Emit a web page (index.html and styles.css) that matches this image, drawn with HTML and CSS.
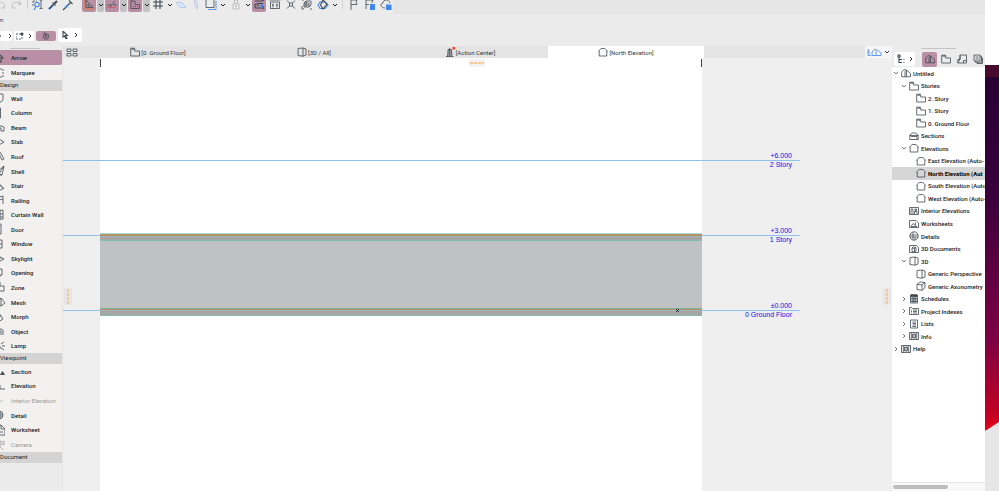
FILE: index.html
```html
<!DOCTYPE html>
<html lang="en">
<head>
  <meta charset="UTF-8" />
  <title>Untitled - North Elevation</title>
  <link rel="stylesheet" href="styles.css">
</head>
<body>
  <!-- Shared icons -->
  <svg class="sprite" aria-hidden="true">
    <symbol id="chev" viewBox="0 0 6 6"><path d="M1 2l2 2 2-2" /></symbol>
    <symbol id="chev-r" viewBox="0 0 6 6"><path d="M2 1l2 2-2 2" /></symbol>
    <symbol id="story" viewBox="0 0 10 10"><path d="M.7 1.200h4v2.800H9.500v5H.7zM2 1.200V3M3.300 1.200V3" /></symbol>
    <symbol id="house" viewBox="0 0 10 10"><path d="M.6 4L3.200 1.500h3.600L9.400 4H8.800v5H1.200V4z" /></symbol>
    <symbol id="section" viewBox="0 0 10 10"><path d="M.8 4l2.500-2h3.400L9.200 4v4.500H.8zM1 4.500h8M2 5.500h6V8" /></symbol>
    <symbol id="cube" viewBox="0 0 10 10"><path d="M1 1.500L6 1v8.200L1 8.500zM6 1l3 1v6L6 9.200" /></symbol>
    <symbol id="axo" viewBox="0 0 10 10"><path d="M1 3.300L6 4v5.300L1 8.500zM1 3.300L4 1l5 .6L6 4M9 1.600v5L6 9.300" /></symbol>
    <symbol id="project" viewBox="0 0 10 10"><path d="M.7 8.800V4L3.700 1l1.800 2M.7 8.800H4V3.500L5.500 2l4 3.500v3.300H4M5.500 2v6.800" /></symbol>
    <symbol id="interior" viewBox="0 0 10 10"><path d="M.5 1.500h9v7h-9zM2 8.500V3h2v5.500M5.500 8V5.500h2.500V8M6 3h1.500v1.500H6z" /></symbol>
    <symbol id="worksheet" viewBox="0 0 10 10"><path d="M.5 8.500v-7h6.500L9.500 4v4.500zM2 7.500l2-3 2.500 2v-3M2 7.500h6" /></symbol>
    <symbol id="detail" viewBox="0 0 10 10"><circle cx="5" cy="5" r="4.200" /><path d="M1 4h8M1 6h8M4 1v8M6 6v3" /></symbol>
    <symbol id="doc3d" viewBox="0 0 10 10"><path d="M.5 1.500h7l2 2v5h-9zM3 4l2.500.5V8L3 7.500zM3 4l1.500-1 2.500.5L5.500 4.500M7 3.500V7L5.500 8" /></symbol>
    <symbol id="sched" viewBox="0 0 10 10"><path class="fill" d="M2 .8h6v2H2z" /><path d="M1.500 1h7v8h-7zM1.500 4.500h7M1.500 6h7M1.500 7.500h7M4 3v6M6 3v6" /></symbol>
    <symbol id="index" viewBox="0 0 10 10"><path d="M.5 1.500h2l1 1h6v6h-9zM2 4h1M4 4h4M2 5.500h1M4 5.500h4M2 7h1M4 7h4" /></symbol>
    <symbol id="lists" viewBox="0 0 10 10"><path d="M1.500 1h7v8h-7zM3.500 3H7M3.500 4.500H7M3.500 6H7M3.500 7.500H7" /></symbol>
    <symbol id="info" viewBox="0 0 10 10"><path d="M.5 1.500h9v7h-9zM2.300 1.500v7M7.700 1.500v7M3.500 3h3v4h-3zM5 3v4" /></symbol>
    <symbol id="layout" viewBox="0 0 10 10"><path d="M3 1h6.500v8H.8L3 5zM3 1v4.500H.8V9M6.500 9V6.500h3" /></symbol>
    <symbol id="publish" viewBox="0 0 10 10"><path d="M1 1h6v6H1zM2.500 7v1.300h6v-6H7M4 8.300v1.200h5.500V4H8.500M2.500 3h3M2.500 5h3" /></symbol>
  </svg>

  <div class="desktop">
    <div class="window">
      <!-- Main toolbar -->
      <div class="toolbar">
        <button class="tool dim first" aria-label="Undo"><svg viewBox="0 0 12 12"><path d="M3 2L1 5l3 1M1.500 5c4-4 9-1 8 4H6" /></svg></button>
        <button class="tool dim" aria-label="Redo"><svg viewBox="0 0 12 12"><path d="M9 2l2 3-3 1M10.500 5c-4-4-10-1-8 4H6" /></svg></button>
        <span class="sep"></span>
        <button class="tool" aria-label="Find and Select"><svg viewBox="0 0 12 12"><path class="dash" d="M1 2h4M1 2v5" /><path d="M9 1v8M7.500 1h3M7.500 9.500h3" /><circle class="blue-line mid" cx="5" cy="5.500" r="2.200" /><path class="blue-line mid" d="M4 7.500L2 11" /></svg></button>
        <button class="tool" aria-label="Pick Up Parameters"><svg viewBox="0 0 12 12"><path class="blue-line thick" d="M2 10l4-4" /><path class="mid" d="M5.500 3.500l3 3M2 10l5-5" /><path class="thick" d="M7.500 4.500L10 2" /></svg></button>
        <button class="tool" aria-label="Inject Parameters"><svg viewBox="0 0 12 12"><path class="blue-line thick" d="M3 9l3-3" /><path class="mid" d="M6 6l3-3M7 1.500l3.500 3.500M1 11l2-2" /></svg></button>

        <button class="tool on group" aria-label="Guide Lines"><svg viewBox="0 0 12 12"><path class="orange-line mid" d="M2 0v10h9" /><path d="M3 1l7 7.500H3zM5 5.500v1.500h1.500z" /></svg></button>
        <button class="drop shade" aria-label="Guide Line options"><svg><use href="#chev" /></svg></button>
        <button class="tool on" aria-label="Snap Guides"><svg viewBox="0 0 12 12"><path d="M1 6h4M7 6h4M4 8l5-6" /><path class="red-line" d="M1 8.500h9" /></svg></button>
        <button class="drop shade" aria-label="Snap Guide options"><svg><use href="#chev" /></svg></button>
        <button class="tool on" aria-label="Tracker"><svg viewBox="0 0 12 12"><path d="M2 0v9.500h8.500V5.500H6V2H2M4 7.500h1M6 7.500h1M8 7.500h1" /></svg></button>
        <button class="drop shade" aria-label="Tracker options"><svg><use href="#chev" /></svg></button>
        <button class="tool" aria-label="Grid"><svg viewBox="0 0 12 12"><path class="mid" d="M4 0v10M8 0v10M1 3h10M1 7h10" /></svg></button>
        <button class="drop" aria-label="Grid options"><svg><use href="#chev" /></svg></button>
        <button class="tool" aria-label="Editing Plane"><svg viewBox="0 0 12 12"><path class="pale" d="M1 3.500h6l4 5H5z" /></svg></button>
        <button class="tool" aria-label="Plane Display"><svg viewBox="0 0 12 12"><path class="pale" d="M5 1l2.500 3v6L5 7z" /></svg></button>
        <button class="tool" aria-label="Trace"><svg viewBox="0 0 12 12"><path class="blue-line" d="M3 10.500h8V2" /><path d="M1 0h8v8.500H1z" /></svg></button>
        <button class="drop" aria-label="Trace options"><svg><use href="#chev" /></svg></button>
        <button class="tool dim spaced" aria-label="Suspend Groups"><svg viewBox="0 0 12 12"><path d="M3 5h6v5H3zM4.500 5V1h3v4M5.500 7h1v1h-1z" /></svg></button>
        <button class="drop" aria-label="Group options"><svg><use href="#chev" /></svg></button>
        <button class="tool on" aria-label="Renovation"><svg viewBox="0 0 12 12"><path class="mid" d="M2 2h7l2-1M2 5.500l3-1h5M2 9h8M2 5v4M10.500 7v3M4 7l2-1" /><path class="blue-fill" d="M7.500 5.500h3v3h-3z" /></svg></button>
        <button class="tool wide" aria-label="Dimensions"><svg viewBox="0 0 12 12"><path d="M.5 1h11M1.500 3h9v6.500h-9zM4 4.500v4M8 4.500v4M3 6h2M7 6h2" /></svg></button>
        <button class="tool wide" aria-label="Explode"><svg viewBox="0 0 12 12"><path d="M2 1.500l2.500 2.500M10 1.500L7.500 4M2 9.500L4.500 7M10 9.500L7.500 7M4.500 4h3v3h-3z" /></svg></button>
        <button class="tool wide" aria-label="Transform"><svg viewBox="0 0 12 12"><path d="M3 8V4l2-2h5v4L8 8zM3 4h5v4M1 1h2M1 10h2M9 10h2M5 2v6M3 6h5M1 7v3" /></svg></button>
        <button class="tool wide" aria-label="3D Cutting"><svg viewBox="0 0 12 12"><path class="blue-line mid" d="M1 6l2-3h5l3 3-3 3.500H3z" /><path class="mid" d="M6 1l4 4-4 5-2.500-4z" /></svg></button>
        <button class="drop" aria-label="3D Cutting options"><svg><use href="#chev" /></svg></button>
        <span class="sep"></span>
        <button class="tool wide" aria-label="Favorites"><svg viewBox="0 0 12 12"><path d="M3 11V1h6L8 3l1 2.500H3" /></svg></button>
        <button class="tool wide" aria-label="Issue Organizer"><svg viewBox="0 0 12 12"><path d="M2 10V1h7L8 3v1M2 5.500h3" /><path class="blue-fill" d="M6 5h5v6H6z" /></svg></button>
        <button class="tool wide" aria-label="Cloud Status"><svg viewBox="0 0 12 12"><path d="M5 9C0 9 0 4 3 4c0-4 6-4 7 0" /><path class="blue-fill" d="M6 5.500h5.500V11H6z" /></svg></button>
      </div>

      <!-- Info box -->
      <div class="infobox">
        <div class="info-label">n:</div>
        <div class="info-row">
          <button class="mode cut" aria-label="Selection method"><svg viewBox="0 0 8 8"><path d="M0 4h2M1 3v2" /></svg><svg class="mini"><use href="#chev-r" /></svg></button>
          <button class="mode" aria-label="Marquee method"><svg viewBox="0 0 8 8"><path class="dash" d="M0 2h6v5H0z" /><path class="fill" d="M5 1h2v2H5z" /></svg><svg class="mini"><use href="#chev-r" /></svg></button>
          <button class="mode on" aria-label="Quick Selection"><svg viewBox="0 0 8 8"><circle cx="4" cy="4.500" r="2.800" /><circle cx="4" cy="4.500" r="1" /><path d="M2 0l2 4" /></svg></button>
          <button class="mode tall" aria-label="Arrow"><svg viewBox="0 0 8 8"><path class="mid" d="M2 0v6l1.500-1L5 8l1-.5-1.500-3h2z" /></svg><svg class="mini"><use href="#chev-r" /></svg></button>
        </div>
      </div>

      <div class="workspace">
        <!-- Toolbox -->
        <nav class="toolbox">
          <div class="grip"></div>
          <ul class="tools pair">
            <li><button class="selected"><svg viewBox="0 0 12 12"><path class="mid" d="M6 2l4 4H8v4H6" /></svg>Arrow</button></li>
            <li><button><svg viewBox="0 0 12 12"><path class="dash" d="M1 2h9v8H1z" /></svg>Marquee</button></li>
          </ul>
          <h2>Design</h2>
          <ul class="tools design">
            <li><button><svg viewBox="0 0 12 12"><path d="M3 2h7v6l-2 2H3" /></svg>Wall</button></li>
            <li><button><svg viewBox="0 0 12 12"><path d="M5 1h2.500v10H5" /></svg>Column</button></li>
            <li><button><svg viewBox="0 0 12 12"><path d="M2 4l6 1 3 1v4H8V7L2 6" /></svg>Beam</button></li>
            <li><button><svg viewBox="0 0 12 12"><path d="M2 3h4l5 3-5 3H2" /></svg>Slab</button></li>
            <li><button><svg viewBox="0 0 12 12"><path d="M2 8l5-6 4 7-2 1-3-6" /></svg>Roof</button></li>
            <li><button><svg viewBox="0 0 12 12"><path d="M11 1L9 10 6 9l5-8-6 5v4l4 0" /></svg>Shell</button></li>
            <li><button><svg viewBox="0 0 12 12"><path d="M3 4h4v2h2v2h2L8 10 3 8M3 6h4" /></svg>Stair</button></li>
            <li><button><svg viewBox="0 0 12 12"><path d="M2 4l8-2v8M2 7l8-2M6 3v7" /></svg>Railing</button></li>
            <li><button><svg viewBox="0 0 12 12"><path d="M3 2l7-1v9l-7 1M3 5h7M3 8h7M7 1v9" /></svg>Curtain Wall</button></li>
            <li><button><svg viewBox="0 0 12 12"><path d="M3 1h5v10H3M6 6v1" /></svg>Door</button></li>
            <li><button><svg viewBox="0 0 12 12"><path d="M3 2h6v8H3M3 6h6" /></svg>Window</button></li>
            <li><button><svg viewBox="0 0 12 12"><path d="M2 4l5 1 4 2-4 2-5-1M4 6h4" /></svg>Skylight</button></li>
            <li><button><svg viewBox="0 0 12 12"><path d="M3 2h6v6H3M7 8v2H3" /></svg>Opening</button></li>
            <li><button><svg viewBox="0 0 12 12"><path d="M3 1h4v4h4v5H5V6H3" /></svg>Zone</button></li>
            <li><button><svg viewBox="0 0 12 12"><path d="M3 7l5-5 4 5-4 3-5-3M8 2v8" /></svg>Mesh</button></li>
            <li><button><svg viewBox="0 0 12 12"><path d="M5 1l3 4 2 3-3 2H3M5 5l3 0" /></svg>Morph</button></li>
            <li><button><svg viewBox="0 0 12 12"><path d="M3 4h5l2 1v5M8 6v4M3 6h5" /></svg>Object</button></li>
            <li><button><svg viewBox="0 0 12 12"><path d="M3 5a3 3 0 0 1 4 4H3M8 4l3-2M9 6h3M8 8l3 2" /></svg>Lamp</button></li>
          </ul>
          <h2>Viewpoint</h2>
          <ul class="tools views">
            <li><button><svg viewBox="0 0 12 12"><path d="M2 9.500h10" /><path class="fill" d="M9.500 6.500l1.500 2.500H8z" /></svg>Section</button></li>
            <li><button><svg viewBox="0 0 12 12"><path d="M2 9h10M7 5v4" /></svg>Elevation</button></li>
            <li><button class="off"><svg viewBox="0 0 12 12"><path d="M5 6h3M9 6h1" /></svg>Interior Elevation</button></li>
            <li><button><svg viewBox="0 0 12 12"><circle cx="6" cy="6" r="4" /><path d="M2 5h8M2 7h8M7 2v8" /></svg>Detail</button></li>
            <li><button><svg viewBox="0 0 12 12"><path d="M3 1h5l4 4v6H3M8 1v4h4M6 8h4" /></svg>Worksheet</button></li>
            <li><button class="off"><svg viewBox="0 0 12 12"><path d="M4 2h4v4H4M9 3l2-1v4L9 5M7 7l3 4M6 7v4" /></svg>Camera</button></li>
          </ul>
          <h2>Document</h2>
        </nav>

        <!-- Drawing area -->
        <main class="main">
          <div class="tabs">
            <button class="overview" aria-label="Tab overview"><svg viewBox="0 0 12 9"><path d="M1 1h4v2.500H1zM7 1h4v2.500H7zM1 5.500h4V8H1zM7 5.500h4V8H7z" /></svg></button>
            <button class="tab"><svg><use href="#story" /></svg>[0. Ground Floor]</button>
            <button class="tab"><svg><use href="#cube" /></svg>[3D / All]</button>
            <button class="tab"><svg viewBox="0 0 10 10"><path d="M2.500 9.500L3 4h3.500l.5 5.500M1 9.500h7.500M3 4V2.500h3.500V4M3 6h4M3 8h4M4.700 1v8" /><path class="alert" d="M7.500 0H10v2.500H7.500z" /></svg>[Action Center]</button>
            <button class="tab active"><svg><use href="#house" /></svg>[North Elevation]</button>
            <button class="popup" aria-label="Pop-up navigator"><svg viewBox="0 0 15 10"><path class="blue-line" d="M1 2v6.500h3M1 4h2M1 6h2M5 8.500V5l3-3 2 1.500M5 8.500h9V6l-3.500-3L9 4.500v4" /></svg><svg class="mini"><use href="#chev" /></svg></button>
          </div>

          <div class="canvas">
            <div class="paper">
              <div class="building">
                <div class="slab"></div>
                <div class="wall"></div>
                <div class="slab base"></div>
              </div>
            </div>
            <div class="story two"><span>+6.000</span><span>2 Story</span></div>
            <div class="story one"><span>+3.000</span><span>1 Story</span></div>
            <div class="story zero"><span>±0.000</span><span>0 Ground Floor</span></div>
            <svg class="origin" viewBox="0 0 5 5"><path d="M1 1l3 3M4 1L1 4" /></svg>
            <div class="handle top"></div>
            <div class="handle left"></div>
            <div class="handle right"></div>
          </div>
        </main>

        <!-- Navigator -->
        <aside class="navigator">
          <div class="grip"></div>
          <div class="nav-head">
            <button class="chooser" aria-label="Project chooser"><svg viewBox="0 0 10 10"><path class="mid" d="M2 1h2v2H2zM3 3v5.500h3M3 5.500h3M7.500 5.500h1M7.500 8.500h1" /></svg><svg class="mini"><use href="#chev-r" /></svg></button>
            <button class="map on" aria-label="Project Map"><svg><use href="#project" /></svg></button>
            <button class="map" aria-label="View Map"><svg><use href="#story" /></svg></button>
            <button class="map" aria-label="Layout Book"><svg><use href="#layout" /></svg></button>
            <button class="map" aria-label="Publisher Sets"><svg><use href="#publish" /></svg></button>
          </div>
          <div class="tree-box">
            <ul class="tree">
              <li class="lv0"><svg class="mini"><use href="#chev" /></svg><svg><use href="#project" /></svg>Untitled</li>
              <li class="lv1"><svg class="mini"><use href="#chev" /></svg><svg><use href="#story" /></svg>Stories</li>
              <li class="lv2"><svg><use href="#story" /></svg>2. Story</li>
              <li class="lv2"><svg><use href="#story" /></svg>1. Story</li>
              <li class="lv2"><svg><use href="#story" /></svg>0. Ground Floor</li>
              <li class="lv1 leaf"><svg><use href="#section" /></svg>Sections</li>
              <li class="lv1"><svg class="mini"><use href="#chev" /></svg><svg><use href="#house" /></svg>Elevations</li>
              <li class="lv2"><svg><use href="#house" /></svg>East Elevation (Auto-</li>
              <li class="lv2 current"><svg><use href="#house" /></svg>North Elevation (Aut</li>
              <li class="lv2"><svg><use href="#house" /></svg>South Elevation (Auto</li>
              <li class="lv2"><svg><use href="#house" /></svg>West Elevation (Auto-</li>
              <li class="lv1 leaf"><svg><use href="#interior" /></svg>Interior Elevations</li>
              <li class="lv1 leaf"><svg><use href="#worksheet" /></svg>Worksheets</li>
              <li class="lv1 leaf"><svg><use href="#detail" /></svg>Details</li>
              <li class="lv1 leaf"><svg><use href="#doc3d" /></svg>3D Documents</li>
              <li class="lv1"><svg class="mini"><use href="#chev" /></svg><svg><use href="#cube" /></svg>3D</li>
              <li class="lv2"><svg><use href="#cube" /></svg>Generic Perspective</li>
              <li class="lv2"><svg><use href="#axo" /></svg>Generic Axonometry</li>
              <li class="lv1"><svg class="mini"><use href="#chev-r" /></svg><svg><use href="#sched" /></svg>Schedules</li>
              <li class="lv1"><svg class="mini"><use href="#chev-r" /></svg><svg><use href="#index" /></svg>Project Indexes</li>
              <li class="lv1"><svg class="mini"><use href="#chev-r" /></svg><svg><use href="#lists" /></svg>Lists</li>
              <li class="lv1"><svg class="mini"><use href="#chev-r" /></svg><svg><use href="#info" /></svg>Info</li>
              <li class="lv0"><svg class="mini"><use href="#chev-r" /></svg><svg><use href="#info" /></svg>Help</li>
            </ul>
          </div>
          <div class="scrollbar"><div class="thumb"></div></div>
        </aside>
      </div>
    </div>

    <!-- What shows beside the window -->
    <div class="behind">
      <div class="wallpaper"><div class="menubar"></div></div>
    </div>
  </div>
</body>
</html>
```
FILE: styles.css
```css
* {
  box-sizing: border-box;
}
body {
  margin: 0;
  font-family: Roboto, "Liberation Sans", sans-serif;
  font-size: 6px;
  color: #222;
  background-color: #ebebeb;
}
button {
  display: flex;
  align-items: center;
  justify-content: center;
  margin: 0;
  padding: 0;
  border: none;
  background: none;
  font: inherit;
  color: inherit;
}
ul {
  list-style: none;
  margin: 0;
  padding: 0;
}
svg {
  flex: none;
  width: 10px;
  height: 10px;
  fill: none;
  stroke: #3f4a50;
  stroke-width: 0.8;
}
.sprite {
  position: absolute;
  width: 0;
  height: 0;
}
.mini {
  width: 6px;
  height: 6px;
  stroke: #333;
  stroke-width: 1;
}
.mid { stroke-width: 1.1; }
.thick { stroke-width: 2; }
.dash { stroke-dasharray: 2 1; }
.fill { fill: #3f4a50; }
.pale { stroke: #a9c4ee; fill: #dce7f8; }
.blue-line { stroke: #3d87f0; }
.blue-fill { stroke: none; fill: #3d87f0; }
.orange-line { stroke: #e07b3c; }
.red-line { stroke: #d04f5f; }
.alert { stroke: none; fill: #fb3b1e; }

.desktop {
  display: flex;
  min-height: 100vh;
  overflow: hidden;
}
.window {
  flex: 1;
  min-width: 0;
  display: flex;
  flex-direction: column;
}

/* toolbar */
.toolbar {
  display: flex;
  gap: 1px;
  height: 14px;
  overflow: hidden;
  background: linear-gradient(90deg, #ebebeb 393px, #e6e6e6 393px);
}
.tool {
  flex: none;
  width: 14px;
  height: 12px;
  padding-bottom: 2px;
  border-radius: 0 0 2px 2px;
}
.tool svg {
  width: 12px;
  height: 12px;
}
.first { margin-left: -6px; }
.group { margin-left: 6px; }
.spaced { margin-left: 2px; }
.wide { width: 15px; }
.dim svg { stroke: #b4b4b4; }
.on { background-color: #b98fa5; }
.drop {
  flex: none;
  width: 7px;
  height: 12px;
  padding-bottom: 2px;
  border-radius: 0 0 2px 2px;
}
.drop svg {
  width: 6px;
  height: 6px;
  stroke: #222;
  stroke-width: 1;
}
.shade { background-color: #c2c1c4; }
.sep {
  width: 6px;
  height: 9px;
  background: linear-gradient(#cfcfcf, #cfcfcf) center / 1px 100% no-repeat;
}

/* info box */
.infobox {
  height: 32px;
}
.info-label {
  height: 12px;
  line-height: 12px;
  font-size: 5px;
}
.info-row {
  display: flex;
  align-items: center;
  gap: 2px;
  height: 17px;
}
.mode {
  gap: 3px;
  width: 20px;
  height: 10px;
  margin-top: 3px;
  border-radius: 2px;
  background-color: #fff;
}
.mode svg {
  width: 8px;
  height: 8px;
}
.mode .mini {
  width: 6px;
  height: 6px;
}
.mode.cut {
  width: 12px;
  gap: 0;
}
.mode.on { background-color: #b98fa5; }
.mode.tall {
  width: 24px;
  height: 14px;
  margin-top: 0;
  gap: 4px;
}

.workspace {
  flex: 1;
  display: flex;
}

/* toolbox */
.toolbox {
  width: 63px;
  overflow: hidden;
  background-color: #ebebeb;
  border-right: 1px solid #e4e4e4;
}
.grip {
  width: 35px;
  height: 3px;
  margin: 0 auto;
  border-bottom: 1px solid #c4c4c4;
}
.toolbox .grip {
  width: 30px;
  margin: 0 0 1px 10px;
}
.toolbox h2 {
  margin: 0;
  height: 11px;
  line-height: 10px;
  font-size: 6px;
  font-weight: 400;
  background-color: #d4d4d4;
}
.tools {
  display: grid;
  grid-auto-rows: 1fr;
  background-color: #f3f1f0;
}
.pair { height: 30px; }
.design { height: 262px; }
.views { height: 88px; }
.tools button {
  width: 100%;
  height: 100%;
  justify-content: flex-start;
  gap: 6px;
  white-space: nowrap;
  font-weight: 500;
}
.tools svg {
  width: 12px;
  height: 12px;
  margin-left: -7px;
}
.tools .selected {
  background-color: #b98fa5;
  border-radius: 0 2px 2px 0;
}
.tools .off {
  color: #999;
  font-weight: 400;
}
.off svg { stroke: #999; }

/* tabs */
.main {
  flex: 1;
  min-width: 0;
  display: flex;
  flex-direction: column;
}
.tabs {
  display: grid;
  grid-template-columns: 17px repeat(4, minmax(0, 156px)) 1fr;
  height: 12px;
  background-color: #e4e4e4;
}
.tab {
  gap: 1px;
  color: #333;
  white-space: nowrap;
}
.tab.active { background-color: #fff; }
.overview svg {
  width: 12px;
  height: 9px;
}
.popup {
  justify-self: end;
  width: 27px;
  gap: 2px;
  background-color: #f6f6f6;
}
.popup svg {
  width: 15px;
  height: 10px;
}
.popup .mini {
  width: 6px;
  height: 6px;
}

/* drawing */
.canvas {
  flex: 1;
  position: relative;
  background-color: #efefef;
}
.paper {
  height: 100%;
  margin: 0 190px 0 37px;
  padding-top: 175px;
  background:
    linear-gradient(#444, #444) left 1px / 1px 8px no-repeat,
    linear-gradient(#444, #444) right 1px / 1px 8px no-repeat,
    #fff;
}
.building {
  position: relative;
  z-index: 1;
}
.slab {
  height: 8px;
  border-top: 1px solid #a9dfdc;
  border-bottom: 1px solid #80bdb5;
  background: linear-gradient(#b8925c 2px, #9fb3c4 2px, #9fb3c4 3px, #a5a5a5 3px);
}
.slab.base {
  border-top-color: #78b59a;
  background: linear-gradient(#b8925c 1px, #9fb3c4 1px, #9fb3c4 2px, #a5a5a5 2px);
}
.wall {
  height: 67px;
  background-color: #c0c1c3;
}
.story {
  position: absolute;
  left: 0;
  right: 92px;
  height: 18px;
  padding-right: 8px;
  display: flex;
  flex-direction: column;
  align-items: flex-end;
  font-family: "Liberation Sans", Arial, sans-serif;
  font-size: 7px;
  line-height: 9px;
  color: #1010e6;
  background: linear-gradient(#8dc2f0, #8dc2f0) 0 9px / 100% 1px no-repeat;
}
.two { top: 93px; }
.one { top: 168px; }
.zero { top: 243px; }
.origin {
  position: absolute;
  z-index: 2;
  right: 212px;
  top: 250px;
  width: 5px;
  height: 5px;
  stroke: #111;
}
.handle {
  position: absolute;
  width: 8px;
  height: 17px;
  padding: 1px 3px;
  background: repeating-linear-gradient(#f5c9a0 0 3px, #e6e6e6 3px 4px) content-box, #e6e6e6;
}
.handle.left {
  left: 1px;
  top: 230px;
}
.handle.right {
  right: 1px;
  top: 230px;
}
.handle.top {
  left: 49%;
  top: 1px;
  width: 16px;
  height: 8px;
  padding: 3px 1px;
  background: repeating-linear-gradient(90deg, #f5c9a0 0 3px, #f3f3f3 3px 4px) content-box, #f3f3f3;
}

/* navigator */
.navigator {
  width: 93px;
  display: flex;
  flex-direction: column;
  overflow: hidden;
}
.nav-head {
  display: flex;
  align-items: center;
  gap: 1px;
  height: 18px;
  padding: 2px 0 0 2px;
}
.chooser {
  width: 22px;
  height: 14px;
  margin-right: 6px;
  gap: 2px;
  border-radius: 2px;
  background-color: #fff;
}
.map {
  flex: none;
  width: 15px;
  height: 15px;
  border-radius: 2px;
}
.tree-box {
  flex: 1;
  background-color: #fff;
}
.tree {
  display: grid;
  grid-auto-rows: 1fr;
  height: 288px;
}
.tree li {
  display: flex;
  align-items: center;
  gap: 2px;
  white-space: nowrap;
  overflow: hidden;
  font-weight: 500;
}
.tree .mini {
  stroke: #777;
}
.lv0 { padding-left: 1px; }
.lv1 { padding-left: 9px; }
.lv1.leaf { padding-left: 17px; }
.lv2 { padding-left: 24px; }
.tree .current {
  background-color: #d6d6d6;
  font-weight: 700;
  color: #000;
}
.scrollbar {
  height: 9px;
  padding: 2px 1px;
  background-color: #f8f8f8;
  border-top: 1px solid #e6e6e6;
}
.thumb {
  width: 60%;
  height: 4px;
  border-radius: 2px;
  background-color: #bdbdbd;
}

/* desktop strip */
.behind {
  width: 14px;
  padding-top: 65px;
  background: linear-gradient(#fff 65px, #e6e6e6 65px);
}
.wallpaper {
  height: 366px;
  background: linear-gradient(#260033, #3a003c 35%, #7d0045 75%, #c00022 95%, #e8001a);
  clip-path: polygon(0 0, 100% 0, 100% 357px, 0 100%);
}
.menubar {
  height: 12px;
  background-color: #48092f;
}
```
